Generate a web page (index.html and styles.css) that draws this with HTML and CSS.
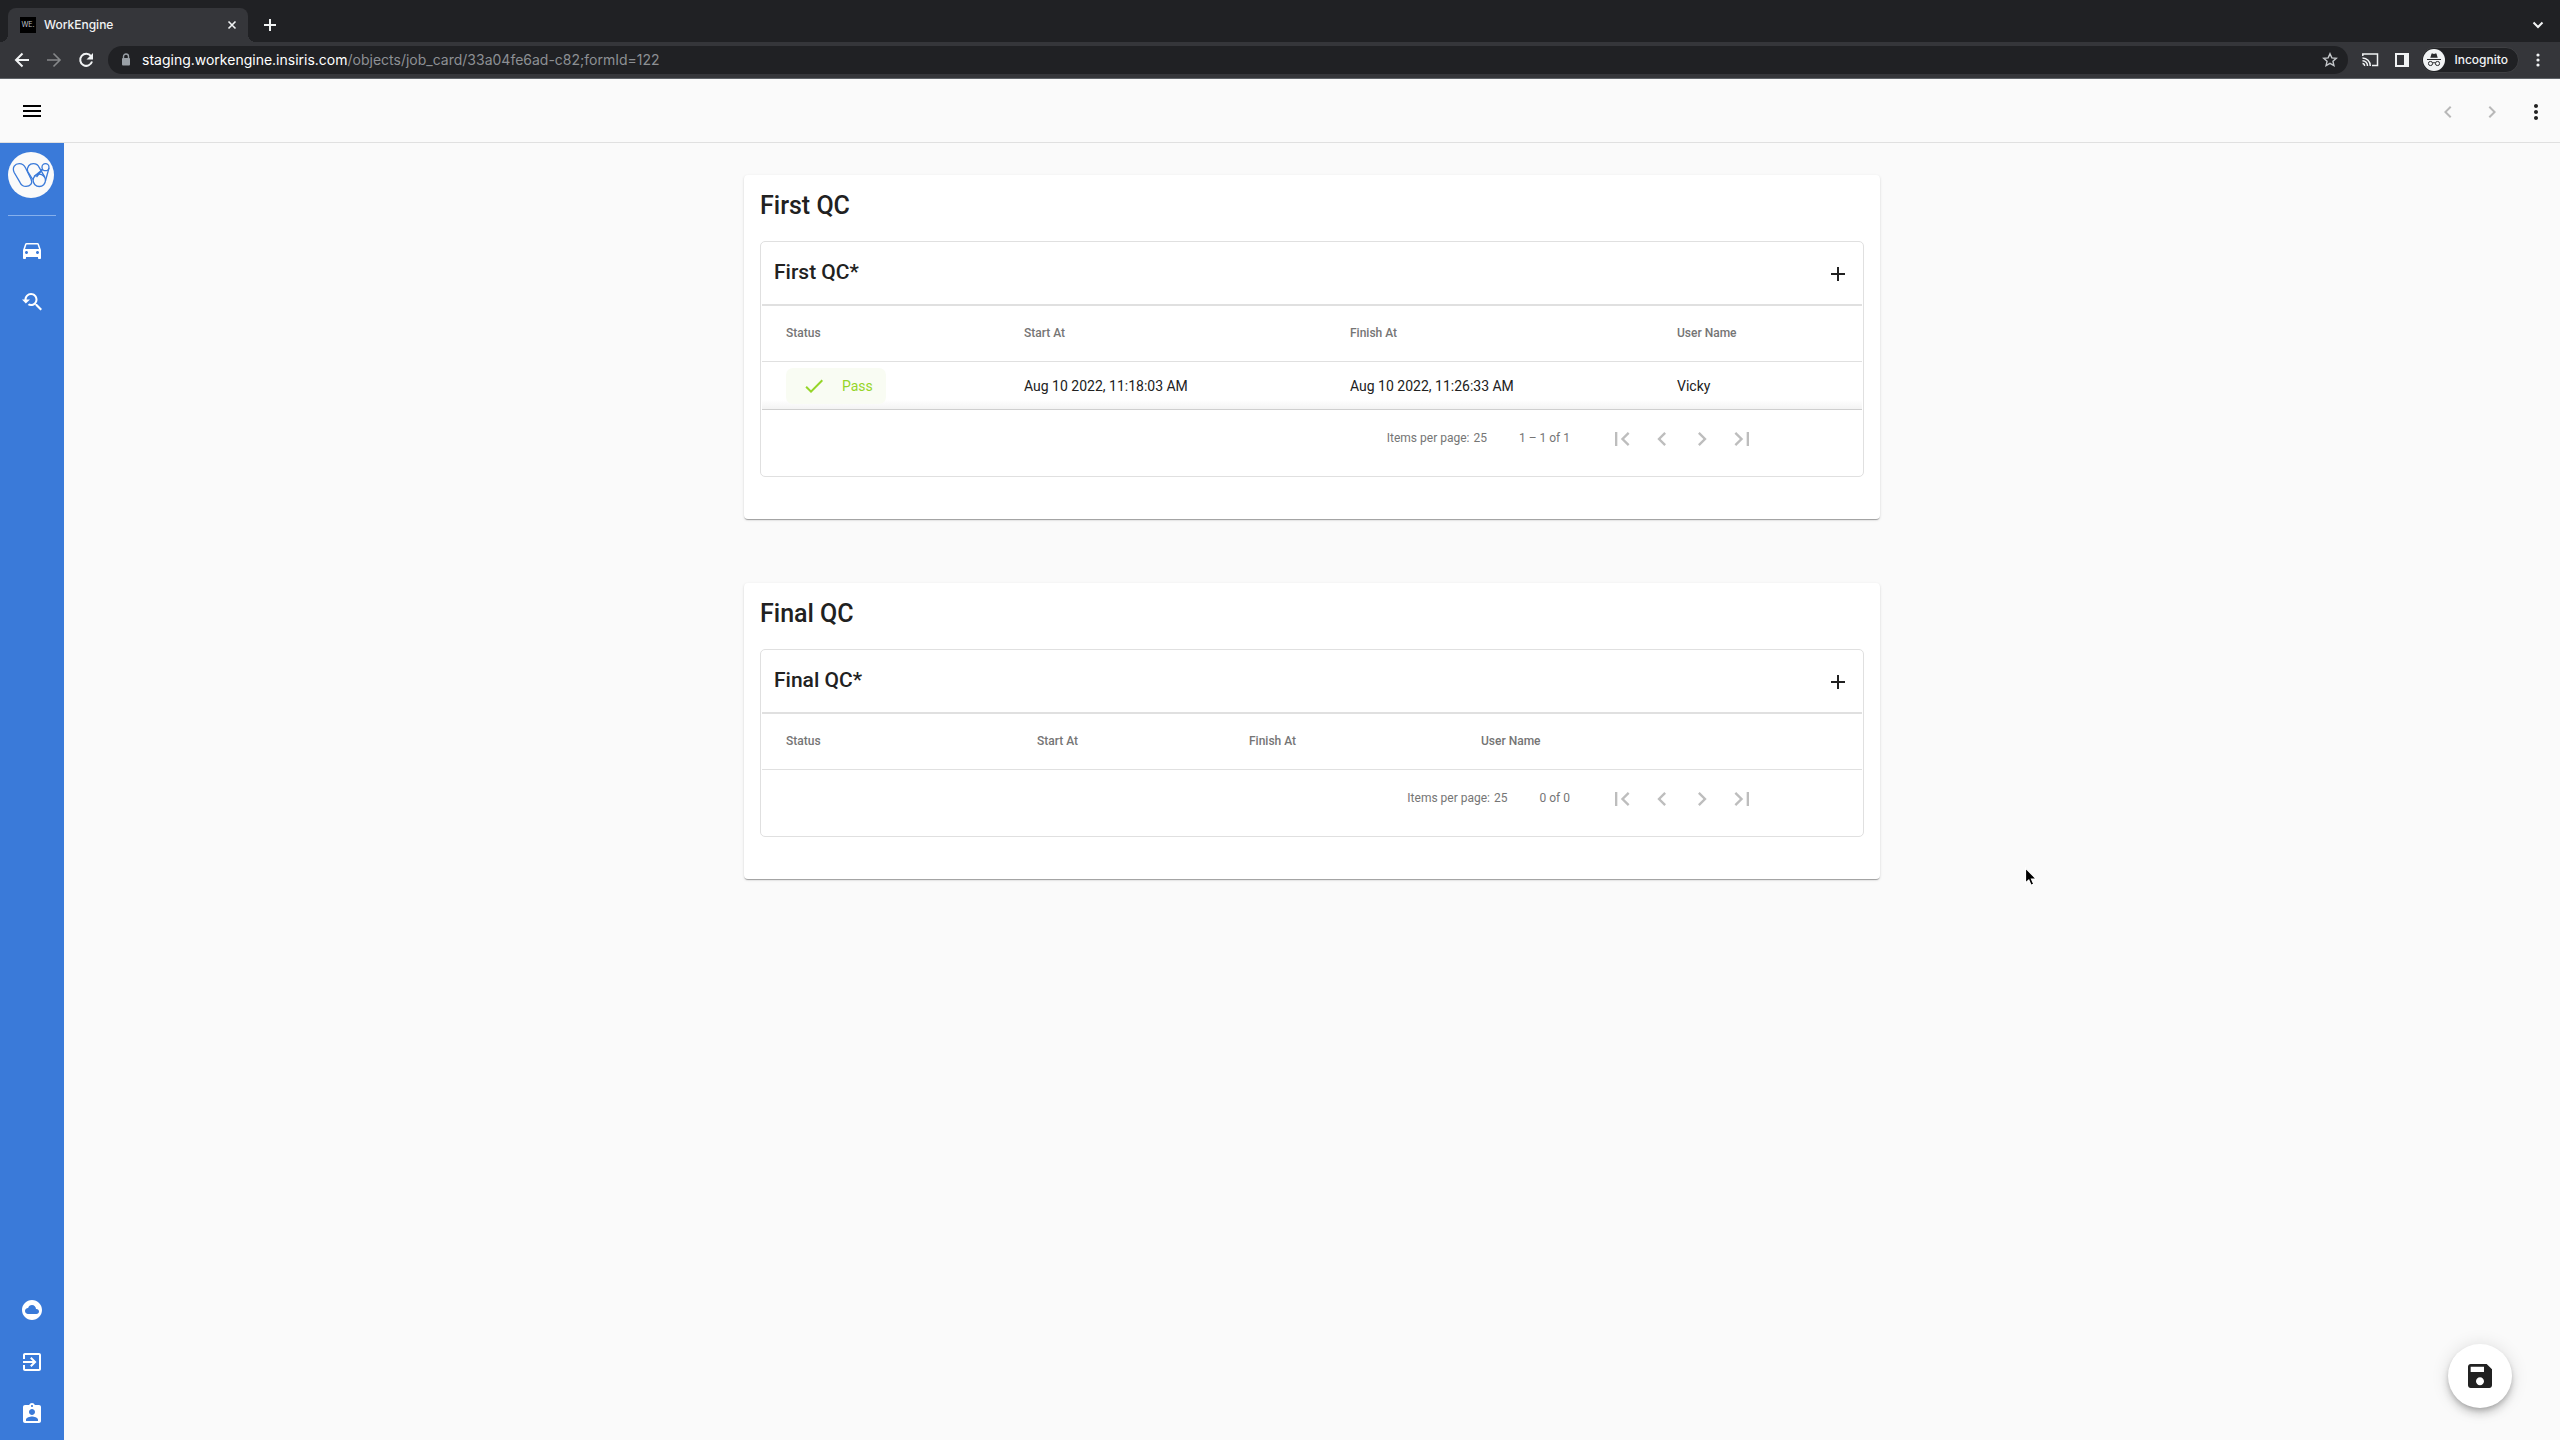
FILE: index.html
```html
<!DOCTYPE html>
<html lang="en">
<head>
<meta charset="utf-8">
<title>WorkEngine</title>
<link rel="stylesheet" href="styles.css">
</head>
<body>
<svg class="sprite" aria-hidden="true">
  <symbol id="plus" viewBox="0 0 24 24"><path d="M19 13h-6v6h-2v-6H5v-2h6V5h2v6h6z"/></symbol>
  <symbol id="left" viewBox="0 0 24 24"><path d="M15.41 7.41L14 6l-6 6 6 6 1.41-1.41L10.83 12z"/></symbol>
  <symbol id="right" viewBox="0 0 24 24"><path d="M10 6L8.59 7.41 13.17 12l-4.58 4.59L10 18l6-6z"/></symbol>
  <symbol id="first" viewBox="0 0 24 24"><path d="M18.41 16.59L13.82 12l4.59-4.59L17 6l-6 6 6 6zM6 6h2v12H6z"/></symbol>
  <symbol id="last" viewBox="0 0 24 24"><path d="M5.59 7.41L10.18 12l-4.59 4.59L7 18l6-6-6-6zM16 6h2v12h-2z"/></symbol>
  <symbol id="dots" viewBox="0 0 24 24"><path d="M12 8c1.1 0 2-.9 2-2s-.9-2-2-2-2 .9-2 2 .9 2 2 2zm0 2c-1.1 0-2 .9-2 2s.9 2 2 2 2-.9 2-2-.9-2-2-2zm0 6c-1.1 0-2 .9-2 2s.9 2 2 2 2-.9 2-2-.9-2-2-2z"/></symbol>
</svg>

<div class="browser">
  <div class="tabstrip">
    <div class="tab">
      <span class="favicon">WE.</span>
      <span class="tab-title">WorkEngine</span>
      <button class="chrome-btn" aria-label="Close tab"><svg width="16" height="16" viewBox="0 0 16 16"><path d="M4.500 4.500l7 7m0-7l-7 7" fill="none" stroke="currentColor" stroke-width="1.600"/></svg></button>
    </div>
    <button class="chrome-btn new-tab" aria-label="New tab"><svg width="16" height="16" viewBox="0 0 16 16"><path d="M8 2v12M2 8h12" fill="none" stroke="currentColor" stroke-width="2"/></svg></button>
    <button class="chrome-btn tab-search" aria-label="Search tabs"><svg width="16" height="16" viewBox="0 0 16 16"><path d="M3.500 5.500L8 10l4.500-4.500" fill="none" stroke="currentColor" stroke-width="2"/></svg></button>
  </div>
  <div class="toolbar">
    <button class="chrome-btn nav" aria-label="Back"><svg width="16" height="16" viewBox="0 0 16 16"><path d="M15 8H2.500M8.500 1.500L2 8l6.500 6.500" fill="none" stroke="currentColor" stroke-width="2"/></svg></button>
    <button class="chrome-btn nav dim" aria-label="Forward"><svg width="16" height="16" viewBox="0 0 16 16"><path d="M1 8h12.500M7.500 1.500L14 8l-6.500 6.500" fill="none" stroke="currentColor" stroke-width="1.600"/></svg></button>
    <button class="chrome-btn nav" aria-label="Reload"><svg width="16" height="16" viewBox="0 0 16 16"><path d="M13 4.200A6 6 0 1 0 14 9.500" fill="none" stroke="currentColor" stroke-width="2"/><path d="M15 1v6.500H8.500z" fill="currentColor"/></svg></button>
    <div class="address">
      <svg class="lock" width="10" height="14" viewBox="0 0 10 14"><path d="M2.500 6V3.500a2.500 2.500 0 0 1 5 0V6" fill="none" stroke="currentColor" stroke-width="1.400"/><rect x="1" y="5" width="8" height="7.500" rx="1" fill="currentColor"/></svg>
      <span class="url"><span class="host">staging.workengine.insiris.com</span>/objects/job_card/33a04fe6ad-c82;formId=122</span>
      <button class="chrome-btn star" aria-label="Bookmark this tab"><svg width="16" height="16" viewBox="0 0 16 16"><path d="M8 1.800l1.850 4.100 4.450.45-3.350 2.950.98 4.400L8 11.400l-3.930 2.300.98-4.400L1.700 6.350l4.450-.45z" fill="none" stroke="currentColor" stroke-width="1.400"/></svg></button>
    </div>
    <button class="chrome-btn tool" aria-label="Cast"><svg width="18" height="16" viewBox="0 0 18 16"><path d="M1.800 4V2h14.700v11.500H11M1.500 11.500a2 2 0 0 1 2 2.500M1.500 8.700a5 5 0 0 1 5 5.300M1.500 5.900a8 8 0 0 1 7.800 8.100" fill="none" stroke="currentColor" stroke-width="1.500"/></svg></button>
    <button class="chrome-btn tool" aria-label="Side panel"><svg width="14" height="14" viewBox="0 0 14 14"><path d="M0 0h14v14H0zM2 2v10h7V2z" fill="currentColor" fill-rule="evenodd"/></svg></button>
    <button class="incognito"><svg width="22" height="22" viewBox="0 0 22 22"><circle cx="11" cy="11" r="11" fill="#f1f3f4"/><path d="M7.300 8.800l1.200-4q.2-.6.900-.4l1.600.5 1.600-.5q.7-.2.900.4l1.200 4z" fill="#292a2d"/><path d="M4 10.500h14M9.800 14q1.200-.8 2.400 0" stroke="#292a2d" fill="none"/><rect x="5.500" y="12.500" width="4" height="4" rx="1.700" fill="none" stroke="#292a2d"/><rect x="12.500" y="12.500" width="4" height="4" rx="1.700" fill="none" stroke="#292a2d"/></svg><span>Incognito</span></button>
    <button class="chrome-btn menu" aria-label="Browser menu"><svg width="16" height="16" viewBox="0 0 16 16" fill="currentColor"><circle cx="8" cy="3" r="1.600"/><circle cx="8" cy="8" r="1.600"/><circle cx="8" cy="13" r="1.600"/></svg></button>
  </div>
</div>

<header class="appbar">
  <button class="icon-btn burger" aria-label="Menu"><svg width="24" height="24" viewBox="0 0 24 24"><path d="M3 18h18v-2H3v2zm0-5h18v-2H3v2zm0-7v2h18V6H3z"/></svg></button>
  <button class="icon-btn muted push" aria-label="Previous record" disabled><svg width="24" height="24"><use href="#left"/></svg></button>
  <button class="icon-btn muted" aria-label="Next record" disabled><svg width="24" height="24"><use href="#right"/></svg></button>
  <button class="icon-btn" aria-label="More"><svg width="24" height="24"><use href="#dots"/></svg></button>
</header>

<div class="shell">
  <nav class="sidebar" aria-label="Main">
    <a href="#" class="logo" aria-label="WorkEngine home"><svg width="46" height="46" viewBox="0 0 46 46"><circle cx="23" cy="23" r="23" fill="#fafafa"/><g fill="none" stroke="#3a7ad9" stroke-width="1.300"><path d="M6.200 20.500C3.800 15 7 11.700 11.300 11.700c3 0 5 1.500 6.300 4.300l5.400 11c2.200 4.500-1 7.400-5 7.400-3 0-4.800-1.400-6-4z"/><path d="M19.700 19.500c-1.200-5 2-7.800 5.600-7.800 3.200 0 5 1.500 6 4l5.500 9.500"/><path d="M34.500 17.500L26 24.500M34.500 17.500L28.500 25"/><path d="M19.700 19.500l5 8"/><circle cx="31.300" cy="28.300" r="6.200"/><circle cx="37.500" cy="15.200" r="3.500"/><path d="M41 16l-3.600 13"/></g></svg></a>
    <hr>
    <a href="#" class="item" aria-label="Job cards"><svg width="24" height="24" viewBox="0 0 24 24"><path d="M18.920 6.010C18.720 5.420 18.160 5 17.500 5h-11c-.66 0-1.210.42-1.420 1.010L3 12v8c0 .55.450 1 1 1h1c.55 0 1-.45 1-1v-1h12v1c0 .55.450 1 1 1h1c.55 0 1-.45 1-1v-8l-2.080-5.990zM6.500 16c-.83 0-1.500-.67-1.500-1.500S5.670 13 6.500 13s1.500.67 1.500 1.500S7.330 16 6.500 16zm11 0c-.83 0-1.500-.67-1.500-1.500s.67-1.500 1.500-1.500 1.500.67 1.500 1.500-.67 1.500-1.500 1.500zM5 11l1.500-4.500h11L19 11H5z"/></svg></a>
    <a href="#" class="item" aria-label="Search history"><svg width="24" height="24" viewBox="0 0 24 24"><path d="M17.010 14h-.8l-.27-.27c.98-1.140 1.570-2.610 1.570-4.230 0-3.590-2.910-6.500-6.500-6.500s-6.500 3-6.500 6.500H2l3.840 4 4.160-4H6.510C6.510 7 8.530 5 11.010 5s4.500 2.010 4.500 4.500c0 2.480-2.020 4.500-4.500 4.500-.65 0-1.260-.14-1.820-.38L7.710 15.100c.97.570 2.090.9 3.300.9 1.610 0 3.080-.59 4.220-1.570l.27.270v.79l5.010 4.990L22 19l-4.990-5z"/></svg></a>
    <div class="bottom">
      <a href="#" class="item" aria-label="Cloud"><svg width="24" height="24" viewBox="0 0 24 24"><path d="M12 2C6.480 2 2 6.480 2 12s4.480 10 10 10 10-4.480 10-10S17.520 2 12 2zm4.500 14H8c-1.660 0-3-1.340-3-3s1.340-3 3-3l.14.010C8.580 8.280 10.130 7 12 7c2.210 0 4 1.790 4 4h.5c1.380 0 2.500 1.120 2.500 2.500S17.880 16 16.500 16z"/></svg></a>
      <a href="#" class="item" aria-label="Sign out"><svg width="24" height="24" viewBox="0 0 24 24"><path d="M10.090 15.590L11.500 17l5-5-5-5-1.410 1.410L12.670 11H3v2h9.670l-2.580 2.590zM19 3H5c-1.110 0-2 .9-2 2v4h2V5h14v14H5v-4H3v4c0 1.100.89 2 2 2h14c1.100 0 2-.9 2-2V5c0-1.100-.9-2-2-2z"/></svg></a>
      <a href="#" class="item" aria-label="Profile"><svg width="24" height="24" viewBox="0 0 24 24"><path d="M19 3h-4.180C14.400 1.840 13.300 1 12 1c-1.300 0-2.400.84-2.820 2H5c-1.100 0-2 .9-2 2v14c0 1.100.9 2 2 2h14c1.100 0 2-.9 2-2V5c0-1.100-.9-2-2-2zm-7 0c.55 0 1 .45 1 1s-.45 1-1 1-1-.45-1-1 .45-1 1-1zm0 4c1.660 0 3 1.340 3 3s-1.340 3-3 3-3-1.340-3-3 1.340-3 3-3zm6 12H6v-1.400c0-2 4-3.100 6-3.100s6 1.100 6 3.100V19z"/></svg></a>
    </div>
  </nav>

  <main>
    <section class="card">
      <h2>First QC</h2>
      <div class="panel">
        <div class="panel-head">
          <h3>First QC*</h3>
          <button class="icon-btn" aria-label="Add first QC"><svg width="24" height="24"><use href="#plus"/></svg></button>
        </div>
        <table>
          <colgroup><col class="c-status"><col class="c-start"><col class="c-finish"><col></colgroup>
          <thead><tr><th>Status</th><th>Start At</th><th>Finish At</th><th>User Name</th></tr></thead>
          <tbody><tr>
            <td><span class="pill"><svg width="24" height="24" viewBox="0 0 24 24"><path d="M9 16.170L4.830 12l-1.420 1.410L9 19 21 7l-1.410-1.410z"/></svg>Pass</span></td>
            <td>Aug 10 2022, 11:18:03 AM</td>
            <td>Aug 10 2022, 11:26:33 AM</td>
            <td>Vicky</td>
          </tr></tbody>
        </table>
        <div class="paginator">
          <span class="label">Items per page:</span><span class="label size">25</span>
          <span class="label range">1 – 1 of 1</span>
          <button class="page-btn" aria-label="First page" disabled><svg width="28" height="28"><use href="#first"/></svg></button>
          <button class="page-btn" aria-label="Previous page" disabled><svg width="28" height="28"><use href="#left"/></svg></button>
          <button class="page-btn" aria-label="Next page" disabled><svg width="28" height="28"><use href="#right"/></svg></button>
          <button class="page-btn" aria-label="Last page" disabled><svg width="28" height="28"><use href="#last"/></svg></button>
        </div>
      </div>
    </section>

    <section class="card">
      <h2>Final QC</h2>
      <div class="panel">
        <div class="panel-head">
          <h3>Final QC*</h3>
          <button class="icon-btn" aria-label="Add final QC"><svg width="24" height="24"><use href="#plus"/></svg></button>
        </div>
        <table>
          <colgroup><col class="e-status"><col class="e-start"><col class="e-finish"><col></colgroup>
          <thead><tr><th>Status</th><th>Start At</th><th>Finish At</th><th>User Name</th></tr></thead>
        </table>
        <div class="paginator">
          <span class="label">Items per page:</span><span class="label size">25</span>
          <span class="label range">0 of 0</span>
          <button class="page-btn" aria-label="First page" disabled><svg width="28" height="28"><use href="#first"/></svg></button>
          <button class="page-btn" aria-label="Previous page" disabled><svg width="28" height="28"><use href="#left"/></svg></button>
          <button class="page-btn" aria-label="Next page" disabled><svg width="28" height="28"><use href="#right"/></svg></button>
          <button class="page-btn" aria-label="Last page" disabled><svg width="28" height="28"><use href="#last"/></svg></button>
        </div>
      </div>
    </section>
  </main>
</div>

<button class="fab" aria-label="Save"><svg width="32" height="32" viewBox="0 0 24 24"><path d="M17 3H5c-1.110 0-2 .9-2 2v14c0 1.100.89 2 2 2h14c1.100 0 2-.9 2-2V7l-4-4zm-5 16c-1.660 0-3-1.340-3-3s1.340-3 3-3 3 1.340 3 3-1.340 3-3 3zm3-10H5V5h10v4z"/></svg></button>
<svg class="cursor" width="14" height="20" viewBox="0 0 14 20"><path d="M1.500 1v15l3.300-3 2.200 5.200 2.700-1.100-2.200-5h4.800z" fill="#000" stroke="#fff" stroke-width="1.200"/></svg>
</body>
</html>
```
FILE: styles.css
```css
* { box-sizing: border-box; }
body {
  margin: 0;
  min-height: 100vh;
  display: flex;
  flex-direction: column;
  background: #fafafa;
  color: #212121;
  font: 400 14px/20px Roboto, "Liberation Sans", sans-serif;
}
h2, h3 { margin: 0; font-weight: 500; }
button { border: 0; padding: 0; background: none; color: inherit; font: inherit; }
svg { display: block; flex: none; }
.sprite { position: absolute; width: 0; height: 0; }

/* Browser frame */
.browser { background: #35363a; color: #f1f3f4; font-family: Inter, Roboto, sans-serif; border-bottom: 1px solid #5f6368; }
.tabstrip { height: 42px; padding: 8px 14px 0 8px; display: flex; align-items: center; background: #202124; }
.tab {
  position: relative;
  width: 240px;
  height: 34px;
  padding: 0 8px 0 12px;
  display: flex;
  align-items: center;
  background: #35363a;
  border-radius: 8px 8px 0 0;
}
.tab::before, .tab::after { content: ""; position: absolute; bottom: 0; width: 8px; height: 8px; }
.tab::before { left: -8px; background: radial-gradient(circle at 0 0, #202124 8px, #35363a 8px); }
.tab::after { right: -8px; background: radial-gradient(circle at 100% 0, #202124 8px, #35363a 8px); }
.favicon { width: 16px; height: 16px; background: #000; color: #bdc1c6; font-size: 7px; line-height: 16px; text-align: center; }
.tab-title { flex: 1; margin-left: 8px; font-size: 12px; font-weight: 500; }
.chrome-btn { display: flex; align-items: center; justify-content: center; }
.new-tab { margin-left: 14px; }
.tab-search { margin-left: auto; }
.toolbar { height: 36px; padding: 0 6px; display: flex; align-items: center; }
.nav { width: 32px; }
.dim { color: #86888a; }
.address {
  flex: 1;
  height: 28px;
  margin: 0 6px;
  padding: 0 10px 0 13px;
  display: flex;
  align-items: center;
  background: #202124;
  border-radius: 14px;
}
.lock { color: #9aa0a6; }
.url { flex: 1; margin-left: 11px; color: #8d9094; font-size: 14px; }
.host { color: #fff; }
.star { color: #c4c7ca; }
.tool { width: 32px; }
.incognito {
  height: 26px;
  margin-left: 3px;
  padding: 0 10px 0 1px;
  display: flex;
  align-items: center;
  gap: 9px;
  background: #202124;
  border: 1px solid #3f4043;
  border-radius: 13px;
  font-size: 12px;
  font-weight: 500;
}
.menu { width: 32px; margin-left: 3px; }

/* Application bar */
.appbar { height: 64px; padding: 2px 12px 0; display: flex; align-items: center; gap: 20px; border-bottom: 1px solid #e0e0e0; }
.icon-btn { display: flex; padding: 0; fill: #212121; }
.burger { margin: 0 0 2px 8px; fill: #000; }
.muted { fill: #b8b8b8; }
.push { margin-left: auto; }
.shell { flex: 1; display: flex; }

/* Side navigation */
.sidebar { width: 64px; flex: none; padding-top: 9px; display: flex; flex-direction: column; background: #3a7ad9; }
.logo { margin-left: 8px; }
.sidebar hr { width: 48px; height: 1px; margin: 17px 8px 8px; border: 0; background: #86b0ec; }
.item { height: 52px; display: flex; align-items: center; justify-content: center; fill: #fff; }
.bottom { margin-top: auto; }

/* QC cards */
main { flex: 1; padding: 32px 24px; display: flex; flex-direction: column; align-items: center; gap: 64px; }
.card {
  width: 100%;
  max-width: 1136px;
  padding: 15px 16px 42px;
  background: #fff;
  border-radius: 4px;
  box-shadow: 0 2px 1px -1px rgba(0,0,0,.2), 0 1px 1px rgba(0,0,0,.14), 0 1px 3px rgba(0,0,0,.12);
}
.card h2 { margin-bottom: 19px; font-size: 25px; line-height: 32px; }
.panel { padding: 0 1px; border: 1px solid #e0e0e0; border-radius: 5px; }
.panel-head { height: 64px; padding: 2px 12px 0; display: flex; align-items: center; justify-content: space-between; border-bottom: 2px solid #e0e0e0; }
.panel-head h3 { padding-bottom: 4px; font-size: 21px; line-height: 28px; }
table { width: 100%; table-layout: fixed; border-collapse: separate; border-spacing: 0; }
.c-status { width: 262px; }
.c-start { width: 326px; }
.c-finish { width: 327px; }
.e-status { width: 275px; }
.e-start { width: 212px; }
.e-finish { width: 232px; }
th, td { padding: 0; text-align: left; border-bottom: 1px solid #e0e0e0; }
th:first-child, td:first-child { padding-left: 24px; }
th { height: 56px; padding-bottom: 2px; color: #757575; font-size: 12px; font-weight: 500; }
td { height: 48px; border-color: #cfcfcf; }
tbody tr { background: linear-gradient(to bottom, transparent 38px, #f2f2f2 48px); }
.pill {
  width: 100px;
  height: 36px;
  padding-left: 16px;
  display: flex;
  align-items: center;
  gap: 16px;
  background: #f9fcf3;
  border-radius: 7px;
  color: #95d528;
  fill: #95d528;
}
.paginator { height: 66px; padding: 0 100px 8px 0; display: flex; align-items: center; justify-content: flex-end; color: #757575; font-size: 12px; }
.label { padding-bottom: 3px; }
.size { margin-left: 4px; }
.range { margin: 0 32px; }
.page-btn { width: 40px; display: flex; justify-content: center; fill: #bdbdbd; }

.fab {
  position: fixed;
  right: 48px;
  bottom: 32px;
  width: 64px;
  height: 64px;
  display: flex;
  align-items: center;
  justify-content: center;
  background: #fff;
  fill: #212121;
  border-radius: 50%;
  box-shadow: 0 3px 5px -1px rgba(0,0,0,.2), 0 6px 10px rgba(0,0,0,.14), 0 1px 18px rgba(0,0,0,.12);
}
.cursor { position: absolute; left: 2024px; top: 867px; }
```
